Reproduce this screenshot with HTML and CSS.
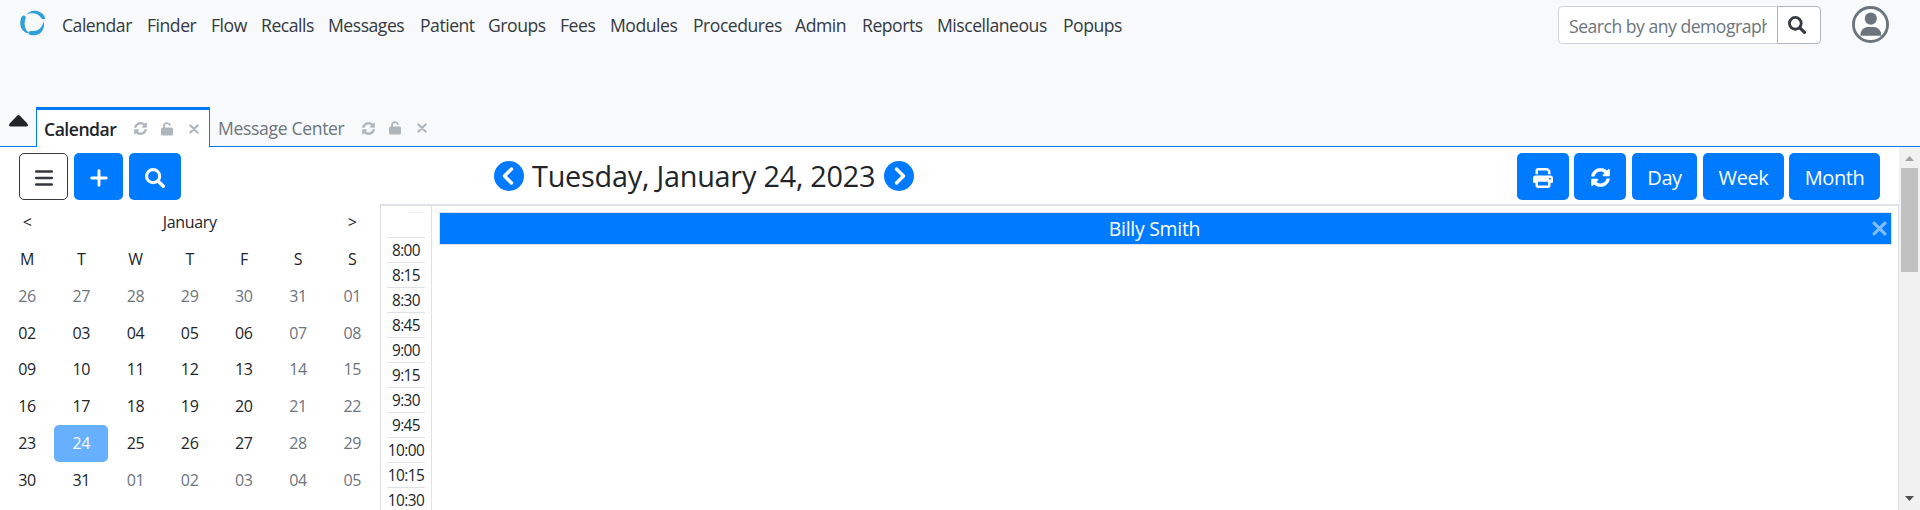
FILE: index.html
```html
<!DOCTYPE html>
<html lang="en">
<head>
<meta charset="utf-8">
<title>Calendar</title>
<link rel="stylesheet" href="styles.css">
</head>
<body>
<svg class="defs" aria-hidden="true">
  <symbol id="sync" viewBox="0 0 512 512"><path d="M370.72 133.28C339.458 104.008 298.888 87.962 255.848 88c-77.458.068-144.328 53.178-162.791 126.85-1.344 5.363-6.122 9.15-11.651 9.15H24.103c-7.498 0-13.194-6.807-11.807-14.176C33.933 94.924 134.813 8 256 8c66.448 0 126.791 26.136 171.315 68.685L463.03 40.97C478.149 25.851 504 36.559 504 57.941V192c0 13.255-10.745 24-24 24H345.941c-21.382 0-32.09-25.851-16.971-40.971l41.75-41.749zM32 296h134.059c21.382 0 32.09 25.851 16.971 40.971l-41.75 41.75c31.262 29.273 71.835 45.319 114.876 45.28 77.418-.07 144.315-53.144 162.787-126.849 1.344-5.363 6.122-9.15 11.651-9.15h57.304c7.498 0 13.194 6.807 11.807 14.176C478.067 417.076 377.187 504 256 504c-66.448 0-126.791-26.136-171.315-68.685L48.97 471.03C33.851 486.149 8 475.441 8 454.059V320c0-13.255 10.745-24 24-24z" stroke="currentColor" stroke-width="14"/></symbol>
  <symbol id="search" viewBox="0 0 512 512"><circle cx="208" cy="208" r="168" fill="none" stroke="currentColor" stroke-width="80"/><path d="M345 345L468 468" fill="none" stroke="currentColor" stroke-width="88" stroke-linecap="round"/></symbol>
  <symbol id="print" viewBox="0 0 512 512"><path d="M128 0C92.7 0 64 28.7 64 64v96h64V64H354.7L384 93.3V160h64V93.3c0-17-6.7-33.3-18.7-45.3L400 18.7C388 6.7 371.7 0 354.7 0H128zM384 352v96H128V352H384zm64 32h32c17.7 0 32-14.3 32-32V256c0-35.3-28.7-64-64-64H64c-35.3 0-64 28.7-64 64v96c0 17.7 14.3 32 32 32H64v64c0 35.3 28.7 64 64 64H384c35.3 0 64-28.7 64-64V384zM432 248a24 24 0 1 1 0 48 24 24 0 1 1 0-48z"/></symbol>
  <symbol id="unlock" viewBox="0 0 12 14"><path d="M1.500 5.500H10.500Q12 5.500 12 7V12Q12 13.500 10.500 13.500H1.500Q0 13.500 0 12V7Q0 5.500 1.500 5.500z"/><path d="M3 6.500V4a3 3 0 0 1 5.800-1" fill="none" stroke="currentColor" stroke-width="1.800" stroke-linecap="round"/></symbol>
  <symbol id="times" viewBox="0 0 10 10"><path d="M1.400 1.400l7.200 7.200M8.600 1.400l-7.200 7.200" fill="none" stroke="currentColor" stroke-width="2.100" stroke-linecap="round"/></symbol>
</svg>

<header class="top">
  <svg class="logo" viewBox="0 0 26 26"><path d="M3.500 5.500C.3 6-.5 14 1.200 18c1.600 3.500 5 5.200 8 5.200C6.500 21 4.500 18 4.600 13.500 4.700 11 5.600 9.500 5.700 7.500 5.700 6 4.800 5.300 3.500 5.500z"/><path d="M6.500 5C9 .8 14 .3 18 1.200c4 1.200 6.500 3.800 7.200 7.300-1 1.200-3 1-3.900-.3C19.500 5.200 17 3.800 13 3.300 10 3 8.300 3.500 6.500 5z"/><path d="M23.500 11c1.600 5-.5 11-4.500 13-3 1.600-8 1.900-10.200.2-.9-1.700.4-3.500 2.500-3.300 3.500.6 7.200-.4 9.500-3.400 1.500-2 2.400-4 2.700-6.500z"/></svg>
  <nav class="menu">
    <a>Calendar</a><a>Finder</a><a>Flow</a><a>Recalls</a><a>Messages</a><a>Patient</a><a>Groups</a><a>Fees</a><a>Modules</a><a>Procedures</a><a>Admin</a><a>Reports</a><a>Miscellaneous</a><a>Popups</a>
  </nav>
  <div class="search">
    <div class="field"><span>Search by any demographics</span></div>
    <button class="go"><svg><use href="#search"/></svg></button>
  </div>
  <svg class="user" viewBox="0 0 36 36"><circle cx="18" cy="18" r="16.600" fill="#fff" stroke="currentColor" stroke-width="2.800"/><circle cx="18.300" cy="12.300" r="5.900"/><path d="M8.300 29V27.500a7 7 0 0 1 7-7h6a7 7 0 0 1 7 7V29z"/></svg>
</header>

<div class="tabs">
  <div class="collapse"><svg viewBox="0 0 19 12"><path d="M8.300.6Q9.500-.4 10.700.6L18.300 8.500Q20 11.500 17 11.500H2Q-1 11.500.7 8.500z"/></svg></div>
  <div class="tab active"><span>Calendar</span><svg class="i-sync"><use href="#sync"/></svg><svg class="i-lock"><use href="#unlock"/></svg><svg class="i-x"><use href="#times"/></svg></div>
  <div class="tab other"><span>Message Center</span><svg class="i-sync"><use href="#sync"/></svg><svg class="i-lock"><use href="#unlock"/></svg><svg class="i-x"><use href="#times"/></svg></div>
</div>

<div class="frame">
  <main class="page">
    <div class="toolbar">
      <button class="btn outline"><svg viewBox="0 0 18 16"><path d="M1.200 1.500h15.600M1.200 8h15.600M1.200 14.500h15.600" stroke="currentColor" stroke-width="2.500" stroke-linecap="round"/></svg></button>
      <button class="btn plus"><svg viewBox="0 0 18 18"><path d="M9 1.800v14.400M1.800 9h14.400" stroke="currentColor" stroke-width="2.900" stroke-linecap="round"/></svg></button>
      <button class="btn find"><svg><use href="#search"/></svg></button>
      <div class="date">
        <svg viewBox="0 0 30 30"><circle cx="15" cy="15" r="15"/><path d="M17.500 8l-7 7 7 7" fill="none" stroke="#fff" stroke-width="3.400" stroke-linecap="round" stroke-linejoin="round"/></svg>
        <h1>Tuesday, January 24, 2023</h1>
        <svg viewBox="0 0 30 30"><circle cx="15" cy="15" r="15"/><path d="M12.500 8l7 7-7 7" fill="none" stroke="#fff" stroke-width="3.400" stroke-linecap="round" stroke-linejoin="round"/></svg>
      </div>
      <div class="views">
        <button class="btn"><svg><use href="#print"/></svg></button>
        <button class="btn"><svg><use href="#sync"/></svg></button>
        <button class="btn spaced">Day</button>
        <button class="btn spaced">Week</button>
        <button class="btn">Month</button>
      </div>
    </div>
    <div class="content">
      <div class="picker">
        <span>&lt;</span><span class="month">January</span><span>&gt;</span>
        <span>M</span><span>T</span><span>W</span><span>T</span><span>F</span><span>S</span><span>S</span>
        <i>26</i><i>27</i><i>28</i><i>29</i><i>30</i><i>31</i><i>01</i>
        <span>02</span><span>03</span><span>04</span><span>05</span><span>06</span><i>07</i><i>08</i>
        <span>09</span><span>10</span><span>11</span><span>12</span><span>13</span><i>14</i><i>15</i>
        <span>16</span><span>17</span><span>18</span><span>19</span><span>20</span><i>21</i><i>22</i>
        <span>23</span><b>24</b><span>25</span><span>26</span><span>27</span><i>28</i><i>29</i>
        <span>30</span><span>31</span><i>01</i><i>02</i><i>03</i><i>04</i><i>05</i>
      </div>
      <div class="schedule">
        <div class="times">
          <div class="spacer"></div>
          <div>8:00</div><div>8:15</div><div>8:30</div><div>8:45</div><div>9:00</div><div>9:15</div><div>9:30</div><div>9:45</div><div>10:00</div><div>10:15</div><div>10:30</div>
        </div>
        <div class="provider"><div class="name"><span>Billy Smith</span><svg><use href="#times"/></svg></div></div>
      </div>
    </div>
  </main>
  <div class="scrollbar">
    <svg viewBox="0 0 9 5"><path d="M0 5L4.500 0 9 5z" fill="#a3a3a3"/></svg>
    <div class="thumb"></div>
    <svg class="down" viewBox="0 0 9 5"><path d="M0 0L4.500 5 9 0z" fill="#505050"/></svg>
  </div>
</div>
</body>
</html>
```
FILE: styles.css
```css
* { box-sizing: border-box; }
body { margin: 0; height: 510px; overflow: hidden; display: flex; flex-direction: column; background: #fff; color: #212529; font-family: "Open Sans", "Noto Sans", sans-serif; font-size: 17.6px; }
svg { display: block; fill: currentColor; flex: none; }
button { font: inherit; margin: 0; }
.defs { display: none; }

.top { height: 107px; flex: none; background: #f8f9fa; display: flex; align-items: flex-start; }
.logo { width: 26px; height: 26px; margin: 10px 0 0 20px; color: #2f9fd8; }
.menu { margin: 12px 0 0 16px; display: grid; grid-template-columns: 85px 64px 50px 67px 92px 67px 73px 50px 83px 102px 67px 75px 126px 70px; line-height: 26px; letter-spacing: -0.48px; color: #343a40; }
.menu a { white-space: nowrap; }
.menu a:nth-child(7) { padding-left: 1px; }
.search { margin: 6px 0 0 auto; display: flex; width: 263px; height: 38px; }
.field { width: 220px; background: #fff; border: 1px solid #ced4da; border-radius: 4px 0 0 4px; padding: 0 10px 0 10px; line-height: 38px; color: #6c757d; letter-spacing: -0.5px; }
.field span { display: block; overflow: hidden; white-space: nowrap; }
.go { width: 44px; margin-left: -1px; border: 1px solid #adb5bd; border-radius: 0 4px 4px 0; background: #fff; color: #343a40; padding: 0 0 0 10px; }
.go svg { width: 18px; height: 18px; }
.user { width: 37px; height: 37px; margin: 6px 31px 0; color: #6c757d; }

.tabs { height: 40px; flex: none; background: #f8f9fa; display: flex; }
.collapse { width: 36px; border-bottom: 1px solid #007bff; padding: 8px 0 0 9px; }
.collapse svg { width: 19px; height: 12px; }
.tab { display: flex; align-items: center; color: #6c757d; }
.tab svg { color: #adb5bd; }
.tab span { white-space: nowrap; line-height: 26px; }
.active { width: 174px; background: #fff; border: 1px solid #007bff; border-top-width: 3px; border-bottom: 0; padding-left: 7px; }
.active span { width: 90px; font-weight: 600; letter-spacing: -0.5px; color: #212529; }
.other { flex: 1; border-bottom: 1px solid #007bff; padding: 3px 0 0 8px; }
.other span { width: 144px; letter-spacing: -0.35px; }
.i-sync { width: 13px; height: 13px; }
.i-lock { width: 12px; height: 14px; margin-left: 14px; }
.i-x { width: 10px; height: 10px; margin-left: 16px; }

.frame { flex: 1; min-height: 0; display: flex; }
.page { flex: 1; min-width: 0; display: flex; flex-direction: column; }
.toolbar { height: 57px; flex: none; padding: 6px 19px 0 19px; display: flex; align-items: flex-start; }
.btn { height: 47px; border: 0; border-radius: 5px; background: #007bff; color: #fff; font-size: 20px; font-weight: 400; padding: 2px 0 0; display: flex; align-items: center; justify-content: center; letter-spacing: -0.4px; }
.btn svg { width: 20px; height: 20px; }
.outline { width: 49px; background: #fff; border: 1px solid #343a40; color: #343a40; }
.outline svg { width: 18px; height: 16px; }
.plus { width: 49px; margin-left: 6px; }
.plus svg { width: 18px; height: 18px; }
.find { width: 52px; margin-left: 6px; }
.date { display: flex; align-items: center; margin: 2px 0 0 313px; height: 30px; padding-top: 14px; color: #007bff; }
.date svg { width: 30px; height: 30px; margin-top: -2px; }
.date h1 { width: 360px; margin: -3px 0 0; padding-left: 8px; font-size: 28.8px; font-weight: 380; line-height: 36px; color: #212529; white-space: nowrap; letter-spacing: -0.22px; }
.views { margin-left: auto; display: grid; grid-template-columns: 52px 52px 66px 82px 91px; column-gap: 5px; }
.views .spaced { margin-left: 1px; }
.views .btn:nth-child(n+2) svg { width: 19px; height: 19px; }

.content { flex: 1; min-height: 0; display: flex; }
.picker { width: 380px; display: grid; grid-template-columns: repeat(7, 54.2px); grid-auto-rows: 36.85px; font-size: 16px; text-align: center; line-height: 36px; letter-spacing: -0.35px; align-content: start; }
.picker .month { grid-column: span 5; }
.picker i { font-style: normal; color: #6c757d; }
.picker b { font-weight: 400; color: #fff; background: #66b0ff; border-radius: 5px; }
.schedule { flex: 1; border: 1px solid #dee2e6; border-top-width: 2px; border-bottom: 0; display: flex; }
.times { width: 51px; flex: none; border-right: 1px solid #dee2e6; padding: 6px 6px 0; font-size: 15.4px; text-align: center; }
.times div { height: 25px; border-bottom: 1px solid #dee2e6; line-height: 25px; letter-spacing: -0.55px; white-space: nowrap; }
.times .spacer { height: 26px; background: linear-gradient(#f0f1f2, #f0f1f2) right top / 17px 1px no-repeat; }
.provider { flex: 1; padding: 6px 6px 6px 7px; }
.name { height: 33px; border: 1px solid #dee2e6; background: #007bff; color: #fff; display: flex; align-items: center; font-size: 19.4px; font-weight: 400; letter-spacing: -0.25px; padding-right: 4px; }
.name span { flex: 1; text-align: center; padding-right: 3px; }
.name svg { width: 15px; height: 15px; color: #80bdff; }

.scrollbar { width: 21px; background: #f1f1f1; display: flex; flex-direction: column; align-items: center; padding-top: 9px; }
.scrollbar svg { width: 9px; height: 5px; }
.thumb { width: 17px; height: 104px; margin-top: 7px; background: #c1c1c1; }
.scrollbar .down { margin-top: auto; margin-bottom: 9px; }
```
